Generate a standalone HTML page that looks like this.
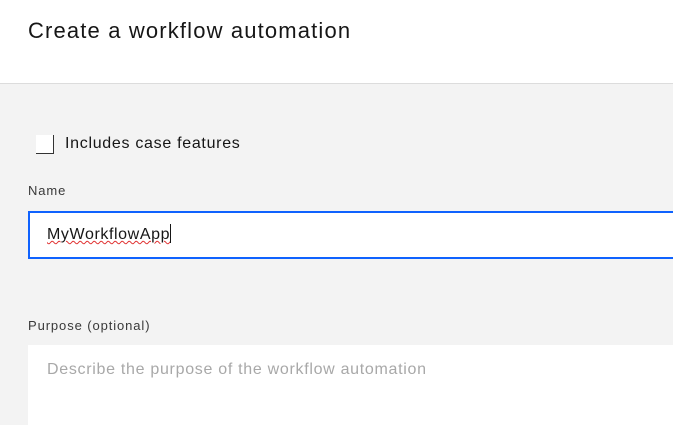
<!DOCTYPE html>
<html><head><style>
body{margin:0;width:673px;height:404px;overflow:hidden;background:#f3f3f3;font-family:"Liberation Sans",sans-serif;position:relative}
.hdr{position:absolute;left:0;top:0;width:673px;height:83px;background:#fff;border-bottom:1px solid #dcdcdc}
.t{position:absolute;left:28px;top:18px;font-size:22px;color:#161616;letter-spacing:1.15px}
.cb{position:absolute;left:36px;top:135px;width:17px;height:18px;background:#fff;border-right:1.5px solid #333;border-bottom:1.5px solid #333}
.cl{position:absolute;left:65px;top:135px;font-size:16px;color:#161616;letter-spacing:0.7px}
.lab{position:absolute;left:28px;font-size:13px;color:#393939;letter-spacing:0.9px}
.inp{position:absolute;left:28px;top:211px;width:660px;background:#fff;border:2px solid #0f62fe;box-sizing:border-box;height:48px}
.v{position:absolute;left:47px;top:224px;font-size:16px;color:#161616;letter-spacing:0.6px}
.v span{text-decoration:underline wavy #e03030;text-decoration-thickness:1px}
.cur{display:inline-block;width:1px;height:19px;background:#161616;vertical-align:-4px}
.ta{position:absolute;left:28px;top:345px;width:660px;height:80px;background:#fff}
.ph{position:absolute;left:47px;top:361px;font-size:16px;color:#a8a8a8;letter-spacing:0.7px}
</style></head><body>
<div class="hdr"><div class="t">Create a workflow automation</div></div>
<div class="cb"></div>
<div class="cl">Includes case features</div>
<div class="lab" style="top:183px">Name</div>
<div class="inp"></div>
<div class="v"><span>MyWorkflowApp</span><i class="cur"></i></div>
<div class="lab" style="top:318px">Purpose (optional)</div>
<div class="ta"></div>
<div class="ph">Describe the purpose of the workflow automation</div>
</body></html>
